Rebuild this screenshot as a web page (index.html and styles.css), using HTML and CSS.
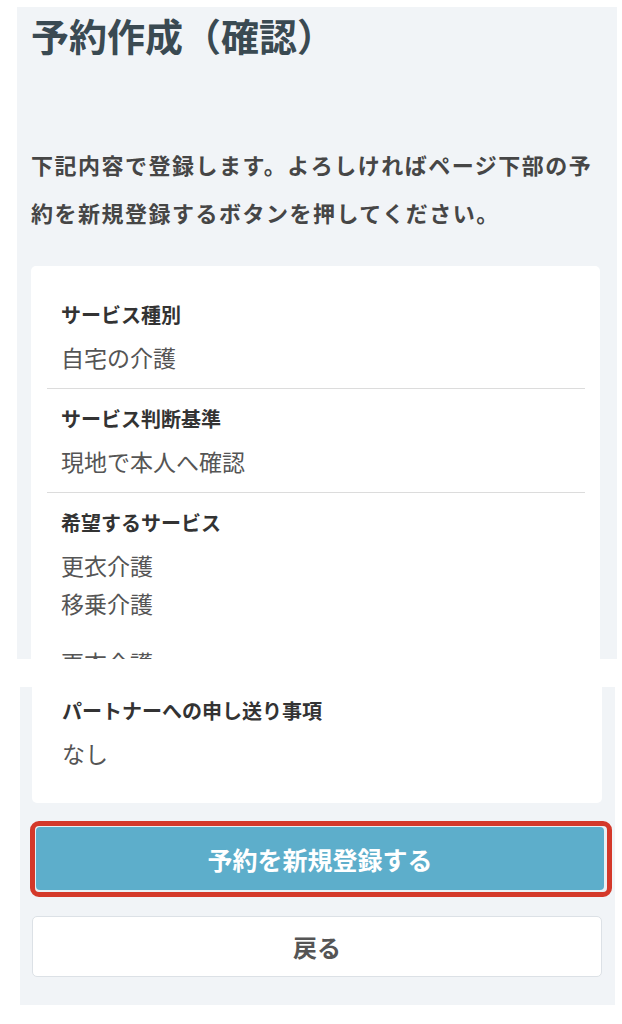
FILE: index.html
```html
<!DOCTYPE html>
<html lang="ja">
<head>
<meta charset="utf-8">
<title>予約作成（確認）</title>
<link rel="stylesheet" href="styles.css">
</head>
<body>
<div class="shot shot-top">
  <h1 class="title">予約作成（確認）</h1>
  <p class="lead">下記内容で登録します。よろしければページ下部の予約を新規登録するボタンを押してください。</p>
  <div class="card">
    <dl class="item">
      <dt>サービス種別</dt>
      <dd>自宅の介護</dd>
    </dl>
    <dl class="item">
      <dt>サービス判断基準</dt>
      <dd>現地で本人へ確認</dd>
    </dl>
    <dl class="item item-open">
      <dt>希望するサービス</dt>
      <dd>更衣介護</dd>
      <dd class="dd-next">移乗介護</dd>
      <dd class="dd-gap">更衣介護</dd>
    </dl>
  </div>
</div>
<div class="shot shot-bottom">
  <div class="card card-cut">
    <dl class="item item-end">
      <dt>パートナーへの申し送り事項</dt>
      <dd>なし</dd>
    </dl>
  </div>
  <div class="mark">
    <button class="btn btn-primary" type="button">予約を新規登録する</button>
  </div>
  <button class="btn btn-back" type="button">戻る</button>
</div>
</body>
</html>
```
FILE: styles.css
```css
html, body {
  margin: 0;
  padding: 0;
  background: #ffffff;
}
body {
  font-family: "Noto Sans CJK JP", "Noto Sans", sans-serif;
  padding-top: 7px;
}
.shot {
  background: #f1f4f7;
  box-sizing: border-box;
}
.shot-top {
  margin-left: 17px;
  width: 600px;
  height: 652px;
  padding: 3px 17px 0 14px;
  overflow: hidden;
}
.title {
  margin: 0;
  font-size: 38px;
  line-height: 50px;
  font-weight: 700;
  color: #3a4a52;
}
.lead {
  margin: 80px 0 0;
  font-size: 22px;
  line-height: 48px;
  letter-spacing: 1.5px;
  font-weight: 700;
  color: #464646;
}
.card {
  margin-top: 30px;
  background: #ffffff;
  border-radius: 5px;
  padding: 19px 15px 0 16px;
}
.item {
  margin: 0;
  padding: 15px 14px 12px;
  border-bottom: 1px solid #dcdcdc;
}
.item-open {
  border-bottom: none;
}
.item dt {
  font-size: 20px;
  line-height: 30px;
  font-weight: 700;
  color: #333333;
}
.item dd {
  margin: 8px 0 0;
  font-size: 23px;
  line-height: 38px;
  color: #555555;
}
.item .dd-next {
  margin-top: 0;
}
.item .dd-gap {
  margin-top: 21px;
}
.shot-bottom {
  margin-top: 28px;
  margin-left: 20px;
  width: 595px;
  padding: 0 13px 28px 12px;
}
.card-cut {
  margin-top: 0;
  border-radius: 0 0 5px 5px;
  padding: 9px 15px 19px 16px;
}
.item-end {
  padding-top: 0;
  border-bottom: none;
}
.mark {
  margin: 18px 0 0 -2px;
  width: 582px;
  box-sizing: border-box;
  border: 5px solid #d4392a;
  border-radius: 9px;
  padding: 1px 3px 2px 1px;
  background: #e9f1f5;
}
.btn {
  display: block;
  width: 100%;
  box-sizing: border-box;
  font-family: "Noto Sans CJK JP", "Noto Sans", sans-serif;
  font-size: 25px;
  font-weight: 700;
  cursor: pointer;
}
.btn-primary {
  height: 63px;
  border: none;
  border-radius: 4px;
  background: #5daecb;
  color: #ffffff;
}
.btn-back {
  margin-top: 19px;
  height: 61px;
  border: 1px solid #dce1e6;
  border-radius: 5px;
  background: #ffffff;
  color: #555555;
  font-size: 24px;
}
```
